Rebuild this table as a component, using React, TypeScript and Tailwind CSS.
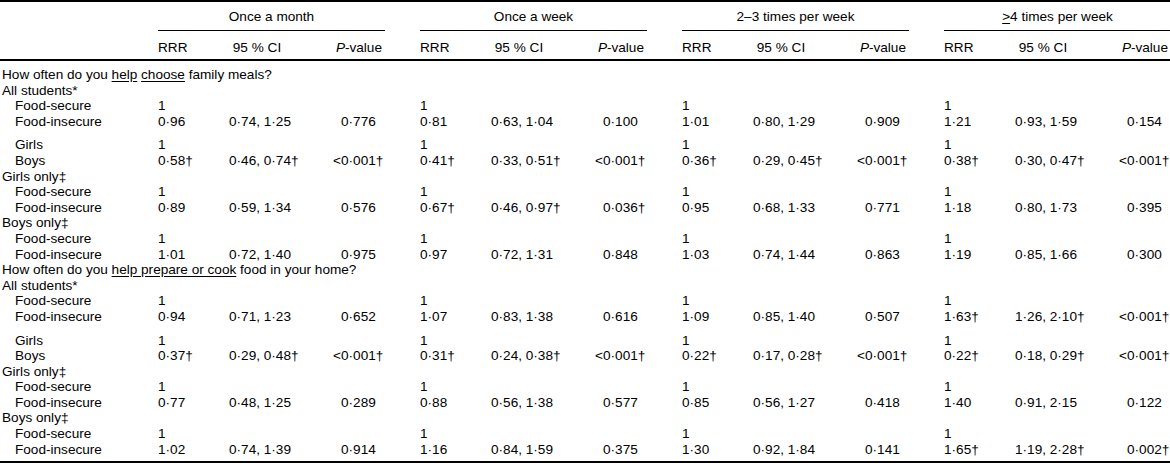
import React from "react";

type Cell = [string, string, string] | null;
type Row =
  | { kind: "q"; text: React.ReactNode }
  | { kind: "h"; text: string }
  | { kind: "r"; text: string; cells: Cell[]; gap?: boolean };

const ONE: Cell[] = [["1", "", ""], ["1", "", ""], ["1", "", ""], ["1", "", ""]];

const rows: Row[] = [
  {
    kind: "q",
    text: (
      <>
        How often do you <span className="underline underline-offset-2">help</span>{" "}
        <span className="underline underline-offset-2">choose</span> family meals?
      </>
    ),
  },
  { kind: "h", text: "All students*" },
  { kind: "r", text: "Food-secure", cells: ONE },
  {
    kind: "r",
    text: "Food-insecure",
    cells: [
      ["0·96", "0·74, 1·25", "0·776"],
      ["0·81", "0·63, 1·04", "0·100"],
      ["1·01", "0·80, 1·29", "0·909"],
      ["1·21", "0·93, 1·59", "0·154"],
    ],
  },
  { kind: "r", text: "Girls", cells: ONE, gap: true },
  {
    kind: "r",
    text: "Boys",
    cells: [
      ["0·58†", "0·46, 0·74†", "<0·001†"],
      ["0·41†", "0·33, 0·51†", "<0·001†"],
      ["0·36†", "0·29, 0·45†", "<0·001†"],
      ["0·38†", "0·30, 0·47†", "<0·001†"],
    ],
  },
  { kind: "h", text: "Girls only‡" },
  { kind: "r", text: "Food-secure", cells: ONE },
  {
    kind: "r",
    text: "Food-insecure",
    cells: [
      ["0·89", "0·59, 1·34", "0·576"],
      ["0·67†", "0·46, 0·97†", "0·036†"],
      ["0·95", "0·68, 1·33", "0·771"],
      ["1·18", "0·80, 1·73", "0·395"],
    ],
  },
  { kind: "h", text: "Boys only‡" },
  { kind: "r", text: "Food-secure", cells: ONE },
  {
    kind: "r",
    text: "Food-insecure",
    cells: [
      ["1·01", "0·72, 1·40", "0·975"],
      ["0·97", "0·72, 1·31", "0·848"],
      ["1·03", "0·74, 1·44", "0·863"],
      ["1·19", "0·85, 1·66", "0·300"],
    ],
  },
  {
    kind: "q",
    text: (
      <>
        How often do you{" "}
        <span className="underline underline-offset-2">help prepare or cook</span> food in your home?
      </>
    ),
  },
  { kind: "h", text: "All students*" },
  { kind: "r", text: "Food-secure", cells: ONE },
  {
    kind: "r",
    text: "Food-insecure",
    cells: [
      ["0·94", "0·71, 1·23", "0·652"],
      ["1·07", "0·83, 1·38", "0·616"],
      ["1·09", "0·85, 1·40", "0·507"],
      ["1·63†", "1·26, 2·10†", "<0·001†"],
    ],
  },
  { kind: "r", text: "Girls", cells: ONE, gap: true },
  {
    kind: "r",
    text: "Boys",
    cells: [
      ["0·37†", "0·29, 0·48†", "<0·001†"],
      ["0·31†", "0·24, 0·38†", "<0·001†"],
      ["0·22†", "0·17, 0·28†", "<0·001†"],
      ["0·22†", "0·18, 0·29†", "<0·001†"],
    ],
  },
  { kind: "h", text: "Girls only‡" },
  { kind: "r", text: "Food-secure", cells: ONE },
  {
    kind: "r",
    text: "Food-insecure",
    cells: [
      ["0·77", "0·48, 1·25", "0·289"],
      ["0·88", "0·56, 1·38", "0·577"],
      ["0·85", "0·56, 1·27", "0·418"],
      ["1·40", "0·91, 2·15", "0·122"],
    ],
  },
  { kind: "h", text: "Boys only‡" },
  { kind: "r", text: "Food-secure", cells: ONE },
  {
    kind: "r",
    text: "Food-insecure",
    cells: [
      ["1·02", "0·74, 1·39", "0·914"],
      ["1·16", "0·84, 1·59", "0·375"],
      ["1·30", "0·92, 1·84", "0·141"],
      ["1·65†", "1·19, 2·28†", "0·002†"],
    ],
  },
];

const groups: React.ReactNode[] = [
  "Once a month",
  "Once a week",
  "2–3 times per week",
  <>
    <span className="underline underline-offset-2">&gt;</span>4 times per week
  </>,
];

function DataCell({ cell }: { cell: Cell }) {
  if (!cell) return <div className="w-[227px] shrink-0" />;
  const [rrr, ci, p] = cell;
  const lt = p.startsWith("<");
  return (
    <div className="flex w-[227px] shrink-0">
      <span className="w-[71px] shrink-0">{rrr}</span>
      <span className="w-[104px] shrink-0">{ci}</span>
      {p && (
        <span className="flex">
          <span className="inline-block w-[8px] text-right">{lt ? "<" : ""}</span>
          <span>{lt ? p.slice(1) : p}</span>
        </span>
      )}
    </div>
  );
}

export default function App() {
  return (
    <div className="w-[1170px] overflow-hidden bg-white font-['Liberation_Sans',Arial,sans-serif] text-[13.6px] leading-[15.6px] text-black">
      <div className="border-t-2 border-black">
        {/* group headings */}
        <div className="flex h-[29px]">
          <div className="w-[158px] shrink-0" />
          <div className="flex gap-x-[35px]">
            {groups.map((g, i) => (
              <div key={i} className="h-[29px] w-[227px] shrink-0 border-b border-black pt-[7px] text-center">
                {g}
              </div>
            ))}
          </div>
        </div>
        {/* column headings */}
        <div className="flex h-[30px] border-b-2 border-black pt-[9px]">
          <div className="w-[158px] shrink-0" />
          <div className="flex gap-x-[35px]">
            {groups.map((_, i) => (
              <div key={i} className="flex w-[227px] shrink-0">
                <span className="w-[55px] shrink-0">RRR</span>
                <span className="w-[88px] shrink-0 text-center">95 % CI</span>
                <span className="flex-1 pr-[3px] text-right">
                  <i>P</i>-value
                </span>
              </div>
            ))}
          </div>
        </div>
      </div>

      <div className="border-b-2 border-black pt-[6px] pb-[4px]">
        {rows.map((r, i) => {
          if (r.kind === "q")
            return (
              <div key={i} className="whitespace-nowrap pl-[2px]">
                {r.text}
              </div>
            );
          if (r.kind === "h")
            return (
              <div key={i} className="whitespace-nowrap pl-[2px]">
                {r.text}
              </div>
            );
          return (
            <div key={i} className={`flex whitespace-nowrap ${r.gap ? "mt-[8px]" : ""}`}>
              <div className="w-[158px] shrink-0 pl-[15px]">{r.text}</div>
              <div className="flex gap-x-[35px]">
                {r.cells.map((c, j) => (
                  <DataCell key={j} cell={c} />
                ))}
              </div>
            </div>
          );
        })}
      </div>
    </div>
  );
}
